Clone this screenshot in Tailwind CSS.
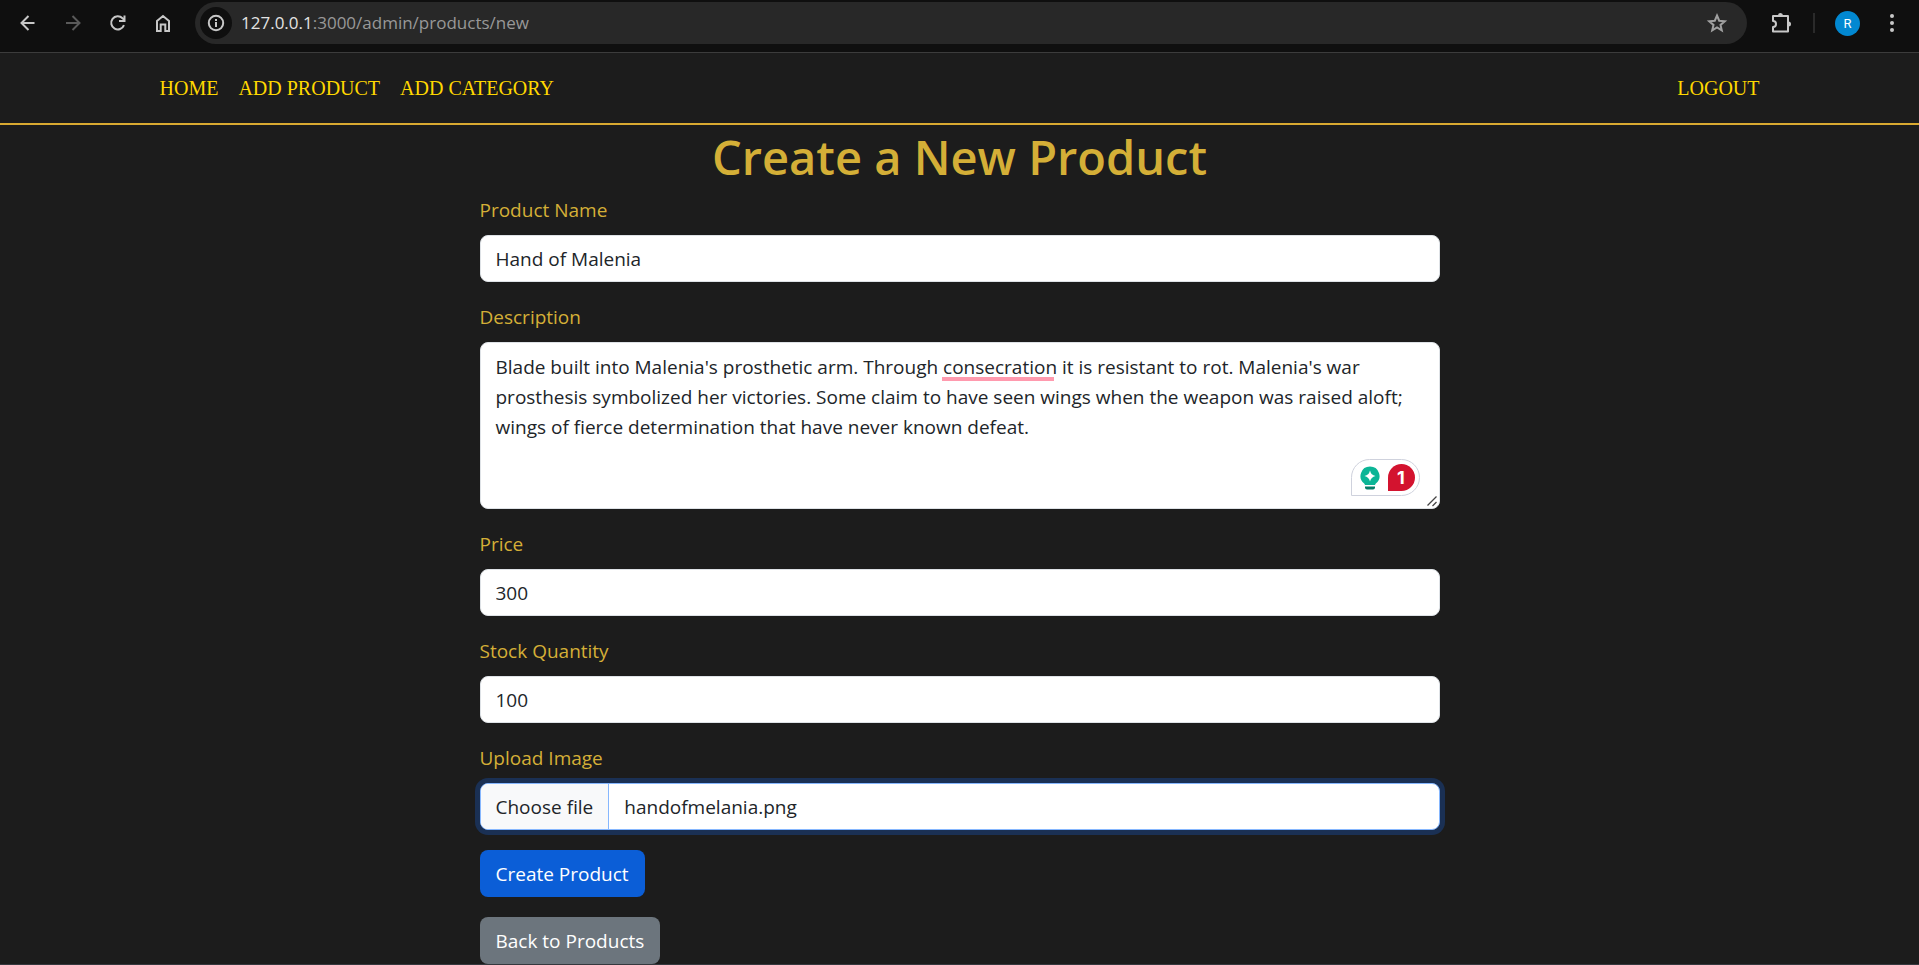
<!DOCTYPE html>
<html lang="en">
<head>
<meta charset="utf-8">
<title>Create a New Product</title>
<script src="https://cdn.jsdelivr.net/npm/@tailwindcss/browser@4"></script>
</head>
<body class="min-h-screen overflow-x-hidden border-b border-[#35383e] bg-[#1c1c1c] font-['Open_Sans','Noto_Sans',sans-serif] text-[19px] leading-[30px]">

<!-- Browser toolbar -->
<div class="flex h-[53px] items-start border-b border-[#3c3c3c] bg-[#0f0f0f] pt-[2px] pr-[15px] pl-4 text-[#c7c7c7]">
  <div class="flex h-[42px] items-center gap-[21px]">
    <button type="button" aria-label="Back" class="flex size-6 items-center justify-center"><svg class="size-6" viewBox="0 0 24 24" fill="none" stroke="currentColor" stroke-width="2"><path d="M18.500 12H6M12.500 5L5.500 12l7 7"/></svg></button>
    <button type="button" aria-label="Forward" class="flex size-6 items-center justify-center text-[#5a5a5a]"><svg class="size-6" viewBox="0 0 24 24" fill="none" stroke="currentColor" stroke-width="2"><path d="M5 12H18M11.500 5l7 7-7 7"/></svg></button>
    <button type="button" aria-label="Reload" class="flex size-6 items-center justify-center"><svg class="size-6" viewBox="0 0 24 24" fill="none" stroke="currentColor" stroke-width="2"><path d="M18 14.200A6.600 6.600 0 1 1 16.500 7.200L18.500 9M18.500 4.500V10H13"/></svg></button>
    <button type="button" aria-label="Home page" class="flex size-6 items-center justify-center"><svg class="size-6" viewBox="0 0 24 24" fill="none" stroke="currentColor" stroke-width="2"><path d="M6 20V10L12 5l6 5v10h-3.700v-6.500H9.700V20z"/></svg></button>
  </div>
  <div class="ml-5 flex h-[42px] flex-1 items-center rounded-full bg-[#282828] pr-[18px] pl-[5px]">
    <button type="button" aria-label="View site information" class="flex h-8 w-8 items-center justify-center rounded-full bg-[#0f0f0f]"><svg class="size-5" viewBox="0 0 20 20" fill="none" stroke="currentColor" stroke-width="2"><circle cx="10" cy="10" r="7.200"/><path d="M10 9v5M10 6v2"/></svg></button>
    <div class="ml-[9px] flex-1 text-[17px] text-[#989898]"><span class="text-[#e3e3e3]">127.0.0.1</span>:3000/admin/products/new</div>
    <button type="button" aria-label="Bookmark this tab" class="text-[#a0a0a0]"><svg class="size-6" viewBox="0 0 24 24" fill="none" stroke="currentColor" stroke-width="2"><path d="M12 4.500l2.200 5.200 5.600.5-4.300 3.700 1.300 5.500-4.800-2.900-4.800 2.900 1.300-5.500-4.300-3.700 5.600-.5z"/></svg></button>
  </div>
  <div class="flex h-[42px] items-center">
    <button type="button" aria-label="Extensions" class="ml-[22px]"><svg class="size-6" viewBox="0 0 24 24"><path d="M4 5h15v15.500H4V16a3 3 0 0 0 0-6z" fill="none" stroke="currentColor" stroke-width="2" stroke-linejoin="round"/><path d="M9 4.500a2.500 2.500 0 0 1 5 0zM19.500 10.500a2.500 2.500 0 0 1 0 5z" fill="currentColor"/></svg></button>
    <span class="ml-5 h-5 w-0.5 bg-[#2a2a2a]"></span>
    <button type="button" aria-label="Profile" class="ml-5 flex size-[25px] items-center justify-center rounded-full bg-[#0288d1] font-[Roboto,sans-serif] text-[13px] leading-none text-white">R</button>
    <button type="button" aria-label="Menu" class="ml-5"><svg class="size-6" viewBox="0 0 24 24" fill="currentColor"><circle cx="12" cy="5" r="2"/><circle cx="12" cy="12" r="2"/><circle cx="12" cy="19" r="2"/></svg></button>
  </div>
</div>

<!-- Site navigation -->
<nav class="border-b-2 border-[#d9a931] bg-[#1c1c1c] pt-5 pb-5">
  <div class="mx-auto flex max-w-[1600px] gap-5 font-['Liberation_Serif',serif] text-xl leading-[30px] text-[#ffd700]">
    <a href="#">HOME</a>
    <a href="#">ADD PRODUCT</a>
    <a href="#">ADD CATEGORY</a>
    <a href="#" class="ml-auto">LOGOUT</a>
  </div>
</nav>

<main class="mx-auto max-w-[960px] text-[#212529]">
  <h1 class="mb-2 pt-0.5 text-center text-[47px] leading-[60px] font-semibold text-[#d4af37]">Create a New Product</h1>
  <form class="flex flex-col items-start gap-5" onsubmit="return false">
    <div class="flex w-full flex-col gap-[10px]">
      <label for="name" class="text-[#d4af37]">Product Name</label>
      <input id="name" type="text" value="Hand of Malenia" class="h-[47px] w-full rounded-lg border border-[#dee2e6] bg-white px-[15px] outline-none">
    </div>
    <div class="flex w-full flex-col gap-[10px]">
      <label for="description" class="text-[#d4af37]">Description</label>
      <div class="relative flex">
        <textarea id="description" spellcheck="false" class="h-[167px] w-full resize-none rounded-lg border border-[#dee2e6] bg-white px-[15px] py-[9px] outline-none">Blade built into Malenia's prosthetic arm. Through consecration it is resistant to rot. Malenia's war prosthesis symbolized her victories. Some claim to have seen wings when the weapon was raised aloft; wings of fierce determination that have never known defeat.</textarea>
        <span class="absolute top-[35px] left-[462px] h-1 w-[112px] bg-[#ff9aae]"></span>
        <div class="absolute right-[20px] bottom-[13px] flex h-[37px] w-[69px] items-center justify-between rounded-full rounded-bl-none border border-[#cfd2dd] bg-white pr-1 pl-[7px]">
          <svg class="h-[26px] w-[22px]" viewBox="0 0 22 26"><path d="M11 1.500a9.500 9.500 0 0 0-5.800 17c.6.500.8 1.200.8 2h10c0-.8.200-1.500.8-2A9.500 9.500 0 0 0 11 1.500z" fill="#0bb596"/><path d="M11 5.500q1 4.500 5.500 5.500-4.500 1-5.500 5.500-1-4.500-5.500-5.500 4.500-1 5.500-5.500z" fill="#fff"/><path d="M6 20.500h10" stroke="#fff" stroke-width="1"/><path d="M6 21.500h10v1a2 2 0 0 1-2 2H8a2 2 0 0 1-2-2z" fill="#067d68"/></svg>
          <button type="button" class="flex size-[27px] items-center justify-center rounded-full rounded-bl-none bg-[#d3132f] font-[Inter,sans-serif] text-lg leading-none font-bold text-white">1</button>
        </div>
        <svg class="pointer-events-none absolute right-[2px] bottom-[2px] size-[11px]" viewBox="0 0 11 11" stroke="#444" stroke-width="1.300"><path d="M0.500 9.500L9.500 0.500M5.500 10L9.500 6"/></svg>
      </div>
    </div>
    <div class="flex w-full flex-col gap-[10px]">
      <label for="price" class="text-[#d4af37]">Price</label>
      <input id="price" type="text" value="300" class="h-[47px] w-full rounded-lg border border-[#dee2e6] bg-white px-[15px] outline-none">
    </div>
    <div class="flex w-full flex-col gap-[10px]">
      <label for="stock" class="text-[#d4af37]">Stock Quantity</label>
      <input id="stock" type="text" value="100" class="h-[47px] w-full rounded-lg border border-[#dee2e6] bg-white px-[15px] outline-none">
    </div>
    <div class="relative flex w-full flex-col gap-[10px]">
      <label for="image" class="text-[#d4af37]">Upload Image</label>
      <input id="image" type="file" class="sr-only">
      <label for="image" class="flex h-[47px] overflow-hidden rounded-lg border border-[#86b7fe] bg-white ring-[5px] ring-[#1a3054]">
        <span class="flex items-center border-r border-[#86b7fe] bg-[#f8f9fa] px-[15px]">Choose file</span>
        <span class="flex items-center px-[15px]">handofmelania.png</span>
      </label>
    </div>
    <button type="submit" class="h-[47px] rounded-lg bg-[#0b5ed7] px-4 text-white">Create Product</button>
    <a href="#" class="flex h-[47px] items-center rounded-lg bg-[#6c757d] px-4 text-white">Back to Products</a>
  </form>
</main>
</body>
</html>
